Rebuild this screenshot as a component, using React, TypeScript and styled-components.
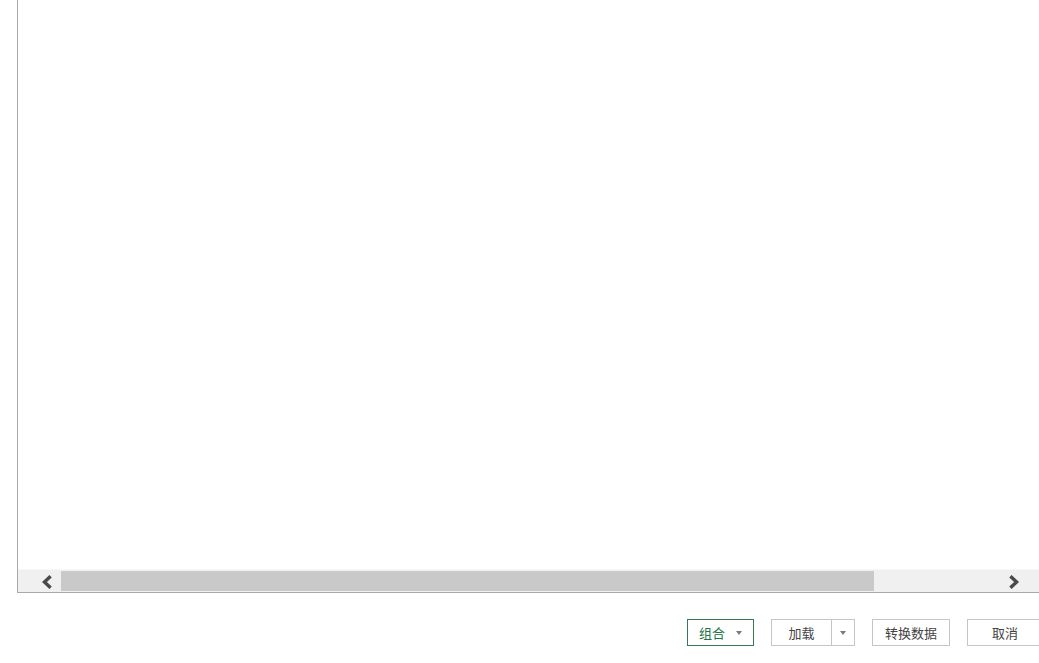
import React from "react";
import styled, { createGlobalStyle } from "styled-components";

const Global = createGlobalStyle`
  html, body {
    margin: 0;
    padding: 0;
    background: #ffffff;
    overflow: hidden;
  }
  body {
    font-family: "Noto Sans CJK SC", "Noto Sans", sans-serif;
  }
`;

const Page = styled.div`
  width: 1039px;
  height: 663px;
  overflow: hidden;
  display: flex;
  flex-direction: column;
  background: #ffffff;
`;

const Preview = styled.div`
  margin-left: 17px;
  height: 593px;
  box-sizing: border-box;
  border-left: 1px solid #a9a9a9;
  border-bottom: 1px solid #a9a9a9;
  display: flex;
  flex-direction: column;
`;

const Content = styled.div`
  flex: 1;
  background: #ffffff;
`;

const HScroll = styled.div`
  height: 23px;
  box-sizing: border-box;
  border-top: 1px solid #f7f7f7;
  background: #f0f0f0;
  display: flex;
  align-items: stretch;
`;

const ArrowButton = styled.div<{ $side: "left" | "right" }>`
  width: ${(p) => (p.$side === "left" ? "43px" : "50px")};
  display: flex;
  align-items: center;
  justify-content: ${(p) => (p.$side === "left" ? "flex-start" : "flex-end")};
  padding-left: ${(p) => (p.$side === "left" ? "24px" : "0")};
  padding-right: ${(p) => (p.$side === "right" ? "20px" : "0")};
  padding-top: 1px;
  box-sizing: border-box;
`;

const Thumb = styled.div`
  width: 813px;
  margin: 1px 0 1px 0;
  background: #c9c9c9;
`;

const Track = styled.div`
  flex: 1;
`;

const Footer = styled.div`
  flex: 1;
  display: flex;
  justify-content: flex-end;
  align-items: flex-start;
  padding-top: 26px;
  gap: 17px;
  margin-right: -4px;
`;

const Button = styled.button<{ $w: number; $primary?: boolean }>`
  width: ${(p) => p.$w}px;
  height: 27px;
  box-sizing: border-box;
  border: 1px solid ${(p) => (p.$primary ? "#357a55" : "#c6c6c6")};
  background: #ffffff;
  color: ${(p) => (p.$primary ? "#217346" : "#444444")};
  font-family: "Noto Sans CJK SC", "Noto Sans", sans-serif;
  font-size: 13px;
  padding: 0;
  display: flex;
  align-items: center;
  justify-content: center;
  gap: 11px;
  cursor: default;
`;

const Split = styled.div`
  width: 84px;
  height: 27px;
  box-sizing: border-box;
  border: 1px solid #c6c6c6;
  display: flex;
  font-family: "Noto Sans CJK SC", "Noto Sans", sans-serif;
  font-size: 13px;
  color: #444444;
`;

const SplitMain = styled.div`
  flex: 1;
  display: flex;
  align-items: center;
  justify-content: center;
`;

const SplitDrop = styled.div`
  width: 22px;
  border-left: 1px solid #c6c6c6;
  display: flex;
  align-items: center;
  justify-content: center;
`;

const Caret = styled.span`
  display: inline-block;
  width: 0;
  height: 0;
  border-left: 3.5px solid transparent;
  border-right: 3.5px solid transparent;
  border-top: 4px solid #7a7a7a;
  margin-top: 1px;
`;

const Chevron = ({ dir }: { dir: "left" | "right" }) => (
  <svg width="10" height="14" viewBox="0 0 10 14">
    {dir === "left" ? (
      <polyline points="8.6,1.2 2.4,7 8.6,12.8" fill="none" stroke="#4a4a4a" strokeWidth="3.4" />
    ) : (
      <polyline points="1.4,1.2 7.6,7 1.4,12.8" fill="none" stroke="#4a4a4a" strokeWidth="3.4" />
    )}
  </svg>
);

export default function App() {
  return (
    <>
      <Global />
      <Page>
        <Preview>
          <Content />
          <HScroll>
            <ArrowButton $side="left">
              <Chevron dir="left" />
            </ArrowButton>
            <Thumb />
            <Track />
            <ArrowButton $side="right">
              <Chevron dir="right" />
            </ArrowButton>
          </HScroll>
        </Preview>
        <Footer>
          <Button $w={67} $primary>
            <span>组合</span>
            <Caret />
          </Button>
          <Split>
            <SplitMain>加载</SplitMain>
            <SplitDrop>
              <Caret />
            </SplitDrop>
          </Split>
          <Button $w={78}>转换数据</Button>
          <Button $w={76}>取消</Button>
        </Footer>
      </Page>
    </>
  );
}
